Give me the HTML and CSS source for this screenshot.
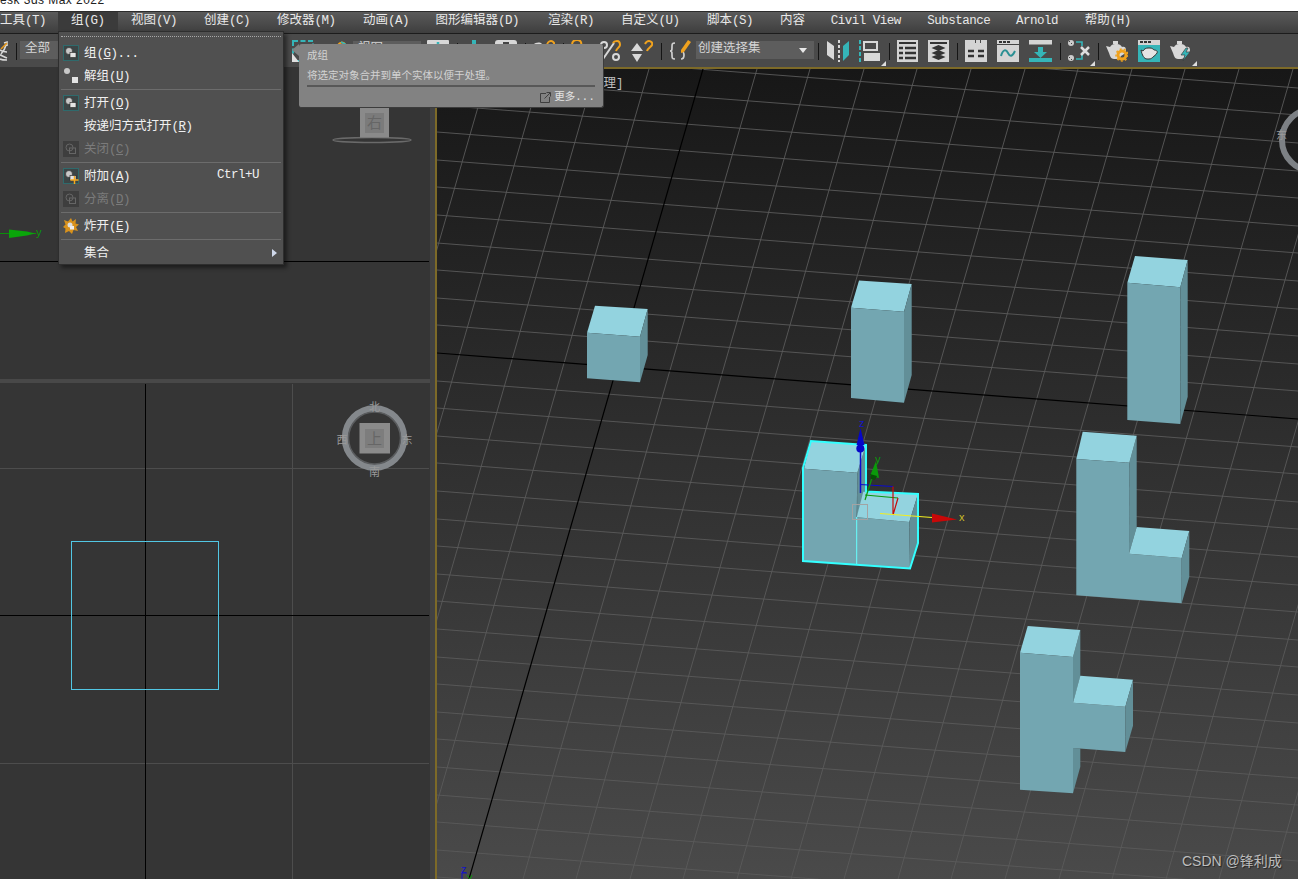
FILE: index.html
```html
<!DOCTYPE html>
<html lang="zh">
<head>
<meta charset="utf-8">
<title>Autodesk 3ds Max 2022</title>
<link rel="stylesheet" href="styles.css">
</head>
<body>
<svg class="defs" width="0" height="0" aria-hidden="true">
  <defs>
    <symbol id="teapot" viewBox="0 0 22 22">
      <path d="M0 6l4 1c1-2 3-3 5-3h2c2 0 4 1 5 3 2-1 4 0 4 3s-3 5-5 6c-1 2-2 3-4 3H8c-3 0-4-3-5-6z" fill="#d8d8d8"/>
      <rect x="7" y="1" width="5" height="3" fill="#d8d8d8"/>
    </symbol>
    <symbol id="grp" viewBox="0 0 16 16">
      <rect x=".5" y=".5" width="15" height="15" fill="#3c4546" stroke="#2f6a6c"/>
      <circle cx="6" cy="6" r="3.5" fill="#c8c8c8" stroke="#222" stroke-width=".6"/>
      <rect x="7" y="7.5" width="6" height="5" fill="#e4e4e4" stroke="#222" stroke-width=".6"/>
    </symbol>
    <symbol id="off" viewBox="0 0 16 16">
      <rect width="16" height="16" fill="#3e3e3e"/>
      <circle cx="6.5" cy="6.5" r="3.5" fill="none" stroke="#666"/>
      <rect x="6.5" y="7" width="6" height="5.5" fill="none" stroke="#666"/>
    </symbol>
  </defs>
</svg>

<div class="app">
  <div class="titlebar"><span class="title-text">esk 3ds Max 2022</span></div>

  <nav class="menubar">
    <span class="mb">工具<span class="a">(T)</span></span>
    <span class="mb is-open">组<span class="a">(G)</span></span>
    <span class="mb">视图<span class="a">(V)</span></span>
    <span class="mb">创建<span class="a">(C)</span></span>
    <span class="mb">修改器<span class="a">(M)</span></span>
    <span class="mb">动画<span class="a">(A)</span></span>
    <span class="mb">图形编辑器<span class="a">(D)</span></span>
    <span class="mb">渲染<span class="a">(R)</span></span>
    <span class="mb">自定义<span class="a">(U)</span></span>
    <span class="mb">脚本<span class="a">(S)</span></span>
    <span class="mb">内容</span>
    <span class="mb"><span class="a">Civil View</span></span>
    <span class="mb"><span class="a">Substance</span></span>
    <span class="mb"><span class="a">Arnold</span></span>
    <span class="mb">帮助<span class="a">(H)</span></span>
  </nav>

  <div class="toolbar">
    <svg class="ic ic-chain" viewBox="0 0 22 22"><path d="M15 14c2-2 4-5 5-9M18 3l3-1v4M12 9c3 2 6 3 9 3M12 14c3 1 6 3 9 4M14 19c2 1 4 1 7 1" fill="none" stroke="#d8d8d8" stroke-width="1.6"/><path d="M15 9c2-2 4-4 6-6" fill="none" stroke="#e79a1f" stroke-width="1.6"/></svg>
    <i class="sep sep-tight"></i>
    <span class="dd dd-all">全部</span>
    <svg class="ic ic-region" viewBox="0 0 22 22"><rect x="1" y="1" width="20" height="20" fill="none" stroke="#35b5b8" stroke-width="2" stroke-dasharray="5 2.5"/><path d="M0 13l7 9H0z" fill="#e0e0e0"/></svg>
    <svg class="ic" viewBox="0 0 22 22"><path d="M5 8c3-3 6-4 9-4v8H5z" fill="#d8d8d8"/><path d="M14 5c2-3 5-3 7-1" fill="none" stroke="#f0a21e" stroke-width="2"/><path d="M17 2l4 2-1 3" fill="none" stroke="#35b5b8" stroke-width="1.5"/></svg>
    <span class="dd dd-view">视图</span>
    <svg class="ic ic-snug" viewBox="0 0 22 22"><rect y="0" width="22" height="20" rx="1" fill="#d8d8d8"/><path d="M11 2v14M6 6h10" stroke="#35b5b8" stroke-width="2.5"/></svg>
    <i class="sep"></i>
    <svg class="ic" viewBox="0 0 22 22"><rect x="7" y="0" width="4" height="6" fill="#35b5b8"/><rect x="2" y="8" width="16" height="10" fill="#d8d8d8"/></svg>
    <svg class="ic ic-near" viewBox="0 0 22 22"><rect y="0" width="22" height="16" rx="3" fill="#d8d8d8"/><rect x="8" y="2" width="6" height="3" fill="#444"/></svg>
    <i class="sep"></i>
    <svg class="ic" viewBox="0 0 22 22"><path d="M0 5c3-3 7-3 9-1v9H0z" fill="#d8d8d8"/><path d="M14 6c0-3 2-5 4-5s4 2 3 5-4 3-4 6" fill="none" stroke="#f0a21e" stroke-width="2"/></svg>
    <i class="sep"></i>
    <svg class="ic" viewBox="0 0 22 22"><path d="M1 5c0-3 2-5 5-5s5 2 4 5-4 3-4 6" fill="none" stroke="#f0a21e" stroke-width="2"/></svg>
    <svg class="ic ic-pct" viewBox="0 0 22 22"><circle cx="5" cy="5" r="3" fill="none" stroke="#d8d8d8" stroke-width="2"/><path d="M4 19L15 3" stroke="#d8d8d8" stroke-width="2"/><circle cx="17" cy="17" r="3" fill="none" stroke="#d8d8d8" stroke-width="2"/><path d="M14 3c1-2 2-2 4-2s3 2 3 4-3 3-4 6" fill="none" stroke="#f0a21e" stroke-width="2"/></svg>
    <svg class="ic" viewBox="0 0 22 22"><path d="M6 3l6 8H0z" fill="#d8d8d8"/><path d="M6 22l5-8H1z" fill="#d8d8d8"/><path d="M14 4c1-2 2-3 4-3s4 2 3 4-4 3-5 6" fill="none" stroke="#f0a21e" stroke-width="2"/></svg>
    <i class="sep"></i>
    <svg class="ic ic-braces" viewBox="0 0 22 22"><path d="M6 3C3 3 3 4 3 7s0 4-2 4c2 0 2 1 2 4s0 4 3 4" fill="none" stroke="#d0d0d0" stroke-width="1.7"/><path d="M14 12c1 1 1 2 1 3s0 4-3 4" fill="none" stroke="#d0d0d0" stroke-width="1.7"/><path d="M12 10L19 0l3 2-7 10-3 1z" fill="#f0a21e"/></svg>
    <span class="dd dd-sets">创建选择集<i class="dd-arrow"></i></span>
    <i class="sep sep-after-dd"></i>
    <svg class="ic" viewBox="0 0 22 22"><path d="M0 1l7 5v14l-7-5z" fill="#d8d8d8"/><path d="M12 0v22" stroke="#d8d8d8" stroke-width="2" stroke-dasharray="3 2"/><path d="M16 6l6-5v14l-6 6z" fill="#35b5b8"/></svg>
    <span class="ic-wrap">
      <svg class="ic" viewBox="0 0 22 22"><path d="M1 0v22" stroke="#35b5b8" stroke-width="2" stroke-dasharray="4 2"/><rect x="5" y="2" width="13" height="8" fill="none" stroke="#d8d8d8" stroke-width="2"/><rect x="5" y="13" width="16" height="8" fill="#d8d8d8"/></svg>
      <i class="flyout"></i>
    </span>
    <i class="sep"></i>
    <svg class="ic ic-doc" viewBox="0 0 21 22"><rect width="21" height="22" fill="#d4d4d4"/><path d="M2 3h17" stroke="#333" stroke-width="2"/><path d="M2 8h4M8 8h11M2 13h4M8 13h11M2 18h4M8 18h11" stroke="#333" stroke-width="2.5"/></svg>
    <svg class="ic ic-doc" viewBox="0 0 21 22"><rect width="21" height="22" fill="#d4d4d4"/><path d="M2 3h17" stroke="#333" stroke-width="2"/><path d="M10.500 5l7 3-7 3-7-3zM10.500 10l7 3-7 3-7-3zM10.500 14l7 3-7 3-7-3z" fill="#333"/></svg>
    <i class="sep"></i>
    <svg class="ic" viewBox="0 0 22 22"><path d="M0 0h10v3h1V0h4v3h1V0h6v22H0z" fill="#d4d4d4"/><path d="M3 11h6M13 11h6M3 16h6M13 16h6" stroke="#333" stroke-width="2.500"/></svg>
    <svg class="ic" viewBox="0 0 22 22"><rect width="22" height="22" fill="#d4d4d4"/><path d="M0 4.500h22" stroke="#444" stroke-width="1"/><path d="M2 2h3M6 2h3M10 2h3" stroke="#333" stroke-width="2"/><path d="M4 16c2-7 5-7 7-3s4 4 7-2" fill="none" stroke="#2a8f93" stroke-width="2"/></svg>
    <svg class="ic ic-wide" viewBox="0 0 23 22"><rect width="23" height="4.500" fill="#d4d4d4"/><path d="M9 7h5v5h4l-6.500 6L5 12h4z" fill="#35b5b8"/><rect y="18" width="23" height="4" fill="#35b5b8"/></svg>
    <i class="sep"></i>
    <span class="ic-wrap">
      <svg class="ic" viewBox="0 0 22 22"><circle cx="3" cy="3" r="3" fill="#ccc"/><circle cx="3" cy="18" r="3" fill="#ccc"/><path d="M1 1h1v1H1zM3 3h1v1H3zM1 17h1v1H1zM3 19h1v1H3z" fill="#444"/><path d="M8 2h6v4M8 19h6v-4" fill="none" stroke="#35b5b8" stroke-width="1.600"/><path d="M13 7l8 8M21 7l-8 8" stroke="#ddd" stroke-width="2.500"/></svg>
      <i class="flyout"></i>
    </span>
    <i class="sep"></i>
    <svg class="ic" viewBox="0 0 22 22"><use href="#teapot"/><circle cx="16" cy="15" r="4" fill="none" stroke="#f0a21e" stroke-width="3"/><circle cx="16" cy="15" r="6" fill="none" stroke="#f0a21e" stroke-width="1.500" stroke-dasharray="2 2.200"/></svg>
    <svg class="ic" viewBox="0 0 22 22"><rect width="22" height="22" fill="#35b5b8"/><rect width="22" height="5" fill="#d4d4d4"/><path d="M2 2h3M6 2h3M10 2h3" stroke="#333" stroke-width="2"/><path d="M3 10l2 1c1-2 3-3 5-3h2c2 0 3 1 4 2 2 0 4 1 3 3s-3 3-4 4c-1 1-2 2-4 2H9c-3 0-5-4-6-9z" fill="#e4e4e4" stroke="#333" stroke-width="1"/></svg>
    <span class="ic-wrap">
      <svg class="ic" viewBox="0 0 22 22"><use href="#teapot"/><path d="M16 8l-5 7h4l-2 6 7-9h-4l2-4z" fill="#35b5b8" stroke="#3d3d3d" stroke-width=".7"/></svg>
      <i class="flyout"></i>
    </span>
  </div>

  <div class="workspace">
    <div class="left">
      <div class="pane pane-top">
        <svg class="pane-svg" viewBox="0 67 430 312" width="430" height="312">
          <path d="M0 261.500H429" stroke="#000" stroke-width="1.200"/>
          <path d="M0 233.500H36" stroke="#0a8f0a"/>
          <path d="M9 229.500L27 231.500 35 233.500 27 235.500 9 238z" fill="#0aa50a"/>
          <text class="axis" x="36" y="236" fill="#0a9a0a">y</text>
          <ellipse cx="372" cy="140" rx="39" ry="2.500" fill="none" stroke="#6a6a6a" stroke-width="1.500"/>
          <rect x="360" y="100" width="29" height="37.500" fill="#8a8a8a"/>
          <rect x="365" y="113" width="19" height="20" fill="#7b7b7b"/>
          <text class="cube-face" x="374.500" y="128" text-anchor="middle">右</text>
        </svg>
      </div>
      <div class="pane-divider"></div>
      <div class="pane pane-bottom">
        <svg class="pane-svg" viewBox="0 383 430 496" width="430" height="496">
          <path d="M292.500 384V879M0 468.500H429M0 763.500H429" stroke="#4d4d4d"/>
          <path d="M145.500 384V879M0 615.500H429" stroke="#000"/>
          <rect x="71.500" y="541.500" width="147" height="148" fill="none" stroke="#52c7e4"/>
          <circle cx="374.500" cy="438" r="29.500" fill="none" stroke="#84888c" stroke-width="6.500"/>
          <circle cx="374.500" cy="438" r="26" fill="none" stroke="#5a5c5e" stroke-width="1.500"/>
          <rect x="359.500" y="423" width="30.500" height="30.500" fill="#8b8b8b"/>
          <rect x="365" y="429" width="19" height="19" fill="#7d7d7d"/>
          <text class="cube-face" x="374.500" y="444" text-anchor="middle">上</text>
          <text class="compass" x="374.500" y="411" text-anchor="middle">北</text>
          <text class="compass" x="374.500" y="476" text-anchor="middle">南</text>
          <text class="compass" x="342" y="444" text-anchor="middle">西</text>
          <text class="compass" x="407" y="444" text-anchor="middle">东</text>
        </svg>
      </div>
    </div>
    <div class="gutter"></div>
    <div class="main">
      <svg class="main-svg" viewBox="437 69 861 810" width="861" height="810">
        <path class="grid" d="M437 -6l861 66M437 22l861 66M437 49l861 66M437 77l861 66M437 105l861 66M437 132l861 66M437 160l861 66M437 187l861 66M437 215l861 66M437 243l861 66M437 270l861 66M437 298l861 66M437 325l861 66M437 381l861 66M437 408l861 66M437 436l861 66M437 463l861 66M437 491l861 66M437 519l861 66M437 546l861 66M437 574l861 66M437 601l861 66M437 629l861 66M437 657l861 66M437 684l861 66M437 712l861 66M437 739l861 66M437 767l861 66M437 795l861 66M437 822l861 66M437 850l861 66M437 877l861 66"/>
        <path class="grid" d="M489 69l-234 810M542 69l-234 810M596 69l-234 810M649 69l-234 810M757 69l-234 810M810 69l-234 810M864 69l-234 810M917 69l-234 810M971 69l-234 810M1025 69l-234 810M1078 69l-234 810M1132 69l-234 810M1185 69l-234 810M1239 69l-234 810M1293 69l-234 810M1346 69l-234 810M1400 69l-234 810M1453 69l-234 810M1507 69l-234 810"/>
        <path class="axis-line" d="M437 353l861 66M703 69l-234 810"/>

        <g class="box">
          <path class="t" d="M595 305.700L647.700 309 640 336.700 587 332.700z"/>
          <path class="f" d="M587 332.700L640 336.700V382.300L587 378.300z"/>
          <path class="s" d="M640 336.700L647.700 309V355L640 382.300z"/>
        </g>
        <g class="box">
          <path class="t" d="M859 280.500L911.700 284 904 311.700 851 307.700z"/>
          <path class="f" d="M851 307.700L904 311.700V402.700L851 398z"/>
          <path class="s" d="M904 311.700L911.700 284V375L904 402.700z"/>
        </g>
        <g class="box">
          <path class="t" d="M1135 256L1187.700 260 1180.300 287.300 1127.300 282.700z"/>
          <path class="f" d="M1127.300 282.700L1180.300 287.300V424L1127.300 420z"/>
          <path class="s" d="M1180.300 287.300L1187.700 260V396.700L1180.300 424z"/>
        </g>
        <g class="box">
          <path class="s" d="M1129.300 462.700L1136.700 435.700V527L1129 553.700z"/>
          <path class="t" d="M1082.700 431.700L1136.700 435.700 1129.300 462.700 1076.300 459z"/>
          <path class="f" d="M1076.300 459L1129.300 462.700 1129 553.700 1181.700 558V603.300L1076.300 595.300z"/>
          <path class="t" d="M1136.700 527L1189.300 531 1181.700 558 1129 553.700z"/>
          <path class="s" d="M1181.700 558L1189.300 531V576.700L1181.700 603.300z"/>
        </g>
        <g class="box">
          <path class="s" d="M1073 657L1080.300 630V676L1073 703z"/>
          <path class="s" d="M1073 748L1080.300 748.500V766.700L1073 793.300z"/>
          <path class="t" d="M1027.700 626L1080.300 630 1073 657 1020 652.700z"/>
          <path class="f" d="M1020 652.700L1073 657V702.700L1125.300 706.700V752L1073 748V793.300L1020 789.700z"/>
          <path class="t" d="M1080.300 675.700L1133 679.700 1125.300 706.700 1073 702.700z"/>
          <path class="s" d="M1125.300 706.700L1133 679.700V725.700L1125.300 752z"/>
        </g>

        <g class="box">
          <path class="s" d="M857.300 472.700L866 444.700V491L857 517z"/>
          <path class="t" d="M810.700 441.300L866 444.700 857.300 472.700 804 468.700z"/>
          <path class="f" d="M804 468.700L857.300 472.700 856.700 517.300 909.300 522 910 568.700 803 561z"/>
          <path class="t" d="M863.300 491.700L918 494 909.300 522 856.700 517.300z"/>
          <path class="s" d="M909.300 522L918 494V543.300L910 568.700z"/>
        </g>
        <path d="M803 561V468L811 441 866 445V491.500L918 494V543L910 568.500z" fill="none" stroke="#3ff" stroke-width="2"/>
        <path d="M856.700 517V564" stroke="#6ff" stroke-width="1"/>

        <rect x="852.500" y="504.500" width="15" height="15" fill="none" stroke="#a3a3a3"/>
        <path d="M860.500 493V448" stroke="#0a0ad0" stroke-width="1.500"/>
        <path d="M860.500 428L856.500 445H864.500z" fill="#0606c8"/>
        <circle cx="860.300" cy="448.500" r="4" fill="#0606c8"/>
        <path d="M860 484.500L893 486.500" stroke="#0a0ad0" stroke-width="1.200"/>
        <path d="M865 500L872 478" stroke="#0a9a0a" stroke-width="1.200"/>
        <path d="M876 461L870 476 879 478z" fill="#0a9a0a"/>
        <path d="M870 474L877 476 875 480 871 479z" fill="#064f06"/>
        <path d="M865 495L898 498" stroke="#0a9a0a" stroke-width="1.200"/>
        <path d="M893 486.500V515M898 498L893 515" stroke="#c80a0a" stroke-width="1.200"/>
        <path d="M880 513.500L932 517.500" stroke="#f2ee20" stroke-width="1.200"/>
        <path d="M932 513.500L957 519.500 932 522.500z" fill="#c80808"/>
        <text class="axis" x="859" y="427" fill="#1414c8">z</text>
        <text class="axis" x="875" y="463" fill="#0a9a0a">y</text>
        <text class="axis" x="959" y="521" fill="#c8bc28">x</text>

        <circle cx="1313" cy="140" r="31" fill="none" stroke="#7d8185" stroke-width="6"/>
        <text class="compass" x="1276" y="139">东</text>

        <path d="M462 879V873H467" fill="none" stroke="#1414c8"/>
        <text class="axis" x="461" y="873" fill="#1414c8">z</text>
        <path d="M467 875L470 879 472 875" fill="none" stroke="#0a9a0a"/>
      </svg>
      <span class="vp-label">处理]</span>
    </div>
  </div>

  <div class="menu">
    <div class="tear"></div>
    <div class="mi"><svg class="mi-ic"><use href="#grp"/></svg><span>组<span class="a">(<u>G</u>)...</span></span></div>
    <div class="mi"><svg class="mi-ic" viewBox="0 0 16 16"><circle cx="4" cy="3" r="3" fill="#c8c8c8"/><rect x="9" y="9" width="6" height="6" fill="#e4e4e4"/></svg><span>解组<span class="a">(<u>U</u>)</span></span></div>
    <div class="msep"></div>
    <div class="mi"><svg class="mi-ic"><use href="#grp"/></svg><span>打开<span class="a">(<u>O</u>)</span></span></div>
    <div class="mi"><span class="mi-ic"></span><span>按递归方式打开<span class="a">(<u>R</u>)</span></span></div>
    <div class="mi is-off"><svg class="mi-ic"><use href="#off"/></svg><span>关闭<span class="a">(<u>C</u>)</span></span></div>
    <div class="msep"></div>
    <div class="mi"><svg class="mi-ic" viewBox="0 0 16 16"><use href="#grp" width="16" height="16"/><path d="M11.500 8v8M7.500 12h8" stroke="#f5a81e" stroke-width="1.500"/></svg><span>附加<span class="a">(<u>A</u>)</span></span><span class="a mi-key">Ctrl+U</span></div>
    <div class="mi is-off"><svg class="mi-ic"><use href="#off"/></svg><span>分离<span class="a">(<u>D</u>)</span></span></div>
    <div class="msep"></div>
    <div class="mi"><svg class="mi-ic" viewBox="0 0 16 16"><path d="M8 0l1.500 3.500L13 1l-.5 4.500 3.500 1-3 2.500 2 4-4.500-1L9 16l-3-3-4 2 .5-4.500L0 9l2.500-2.500L1 2l4 1.500z" fill="#d9921c"/><circle cx="7" cy="7" r="2.500" fill="#ddd"/><rect x="7" y="8" width="4" height="3.500" fill="#eee"/></svg><span>炸开<span class="a">(<u>E</u>)</span></span></div>
    <div class="msep"></div>
    <div class="mi"><span class="mi-ic"></span><span>集合</span><i class="mi-arrow"></i></div>
  </div>

  <div class="tip">
    <i class="tip-arrow"></i>
    <div class="tip-title">成组</div>
    <div class="tip-desc">将选定对象合并到单个实体以便于处理。</div>
    <div class="tip-rule"></div>
    <div class="tip-more">
      <svg class="tip-link" viewBox="0 0 11 11"><path d="M6 1.500H.5v9h9V5M4.500 6.500L10 1M6.500 .5h4v4" fill="none" stroke="#3f3f3f"/></svg>
      <span>更多<span class="a">...</span></span>
    </div>
  </div>

  <span class="watermark">CSDN @锋利成</span>
</div>
</body>
</html>
```
FILE: styles.css
```css
* { box-sizing: border-box; }
html, body { margin: 0; padding: 0; background: #353535; }
body {
  font-family: "Liberation Mono", "Noto Sans CJK SC", monospace;
  font-size: 12.5px;
  color: #e8e8e8;
  overflow: hidden;
}
.defs { position: absolute; }
.app {
  position: relative;
  width: 1298px;
  height: 879px;
  overflow: hidden;
  display: flex;
  flex-direction: column;
}
.a { font-size: 12.5px; letter-spacing: -.5px; font-family: "Liberation Mono", monospace; }

/* title */
.titlebar {
  height: 11px;
  background: #fff;
  overflow: hidden;
  color: #222;
  flex: none;
}
.title-text {
  display: block;
  margin-top: -7px;
  font: 12px/14px "Liberation Sans", sans-serif;
  letter-spacing: .45px;
}

/* menu bar */
.menubar {
  height: 23px;
  flex: none;
  margin-left: -13px;
  width: 1311px;
  display: grid;
  grid-template-columns: 71px 60px 73px 73px 86px 72.5px 112.5px 73px 86px 73px 50.7px 96.6px 88.7px 68.7px 1fr;
  align-items: stretch;
  background: linear-gradient(#5a5a5a, #3e3e3e);
  border-top: 1px solid #2c2c2c;
  border-bottom: 1px solid #1c1c1c;
}
.mb {
  padding-left: 13px;
  line-height: 19px;
  white-space: nowrap;
}
.is-open { background: #3b3b3b; }

/* tool bar */
.toolbar {
  height: 33px;
  flex: none;
  display: flex;
  align-items: center;
  background: #4a4a4a;
  margin-left: -14px;
  width: 1312px;
  padding-top: 1px;
}
.ic { width: 22px; height: 22px; flex: none; display: block; }
.ic + .ic, .ic-wrap + .ic, .ic + .ic-wrap { margin-left: 10px; }
.ic-doc { width: 21px; }
.ic-wide { width: 23px; }
.ic-snug { margin-left: 6px; }
.ic-near { margin-left: 8px !important; }
.ic-pct { margin-left: 6px !important; }
.ic-braces { margin-left: 0; }
.ic-wrap { position: relative; flex: none; }
.flyout {
  position: absolute;
  right: -5px;
  bottom: -4px;
  width: 0;
  height: 0;
  border-left: 5px solid transparent;
  border-bottom: 5px solid #ddd;
}
.sep {
  width: 1px;
  height: 17px;
  background: #151515;
  flex: none;
  margin: 0 7px 0 8px;
}
.sep-tight { margin: 0 3px 0 8px; }
.sep-after-dd { margin: 0 8px 0 4px; }
.dd {
  height: 18px;
  line-height: 17px;
  background: #5d5d5d;
  color: #d4d4d4;
  flex: none;
  position: relative;
  padding-left: 5px;
  margin-top: -2px;
}
.dd-all { width: 80px; }
.ic-region { margin-left: 192px; }
.dd-view { width: 68px; margin-left: 7px; }
.dd-sets { width: 118px; margin-left: 5px; padding-left: 2px; }
.dd-arrow {
  position: absolute;
  right: 7px;
  top: 7px;
  width: 0;
  height: 0;
  border: 4px solid transparent;
  border-top: 5px solid #e8e8e8;
  border-bottom: 0;
}

/* workspace */
.workspace { flex: 1; display: flex; min-height: 0; }
.left { width: 430px; flex: none; display: flex; flex-direction: column; }
.pane { background: #353535; }
.pane-top { height: 312px; flex: none; }
.pane-divider { height: 4px; flex: none; background: #484848; }
.pane-bottom { flex: 1; }
.pane-svg, .main-svg { display: block; }
.gutter { width: 5px; flex: none; background: #424242; }
.main {
  position: relative;
  flex: 1;
  border-top: 2px solid #7d6a28;
  border-left: 2px solid #7d6a28;
  background: linear-gradient(#171717, #4a4a4a);
}
.grid { fill: none; stroke: #5a5a5a; stroke-width: .9; }
.axis-line { fill: none; stroke: #000; stroke-width: 1.200; }
.box .t { fill: #93d3df; }
.box .f { fill: #73a6b1; }
.box .s { fill: #628f98; }
.axis { font: 11px "Liberation Sans", sans-serif; }
.cube-face { font: 15px "Noto Sans CJK SC", sans-serif; fill: #666; }
.compass { font: 11px "Noto Sans CJK SC", sans-serif; fill: #9a9a9a; }
.vp-label {
  position: absolute;
  left: 154px;
  top: 7px;
  color: #bdbdbd;
  line-height: 16px;
  white-space: nowrap;
}

/* group menu */
.menu {
  position: absolute;
  left: 58px;
  top: 31px;
  width: 226px;
  height: 234px;
  padding: 4px 0 0;
  background: #505050;
  border: 1px solid #2e2e2e;
  box-shadow: 3px 3px 4px rgba(0, 0, 0, .45);
  z-index: 5;
}
.tear { border-top: 1px dotted #a8a8a8; margin: 0 2px 4px; }
.mi {
  display: flex;
  align-items: center;
  height: 23px;
  padding-left: 4px;
  white-space: nowrap;
  color: #f0f0f0;
}
.mi > span { margin-bottom: 2px; }
.mi-ic { width: 16px; height: 16px; margin-right: 5px; flex: none; display: block; }
.mi-key { margin-left: auto; margin-right: 24px; }
.is-off { color: #7b7b7b; }
.mi-arrow {
  margin-left: auto;
  margin-right: 6px;
  width: 0;
  height: 0;
  border: 4px solid transparent;
  border-left: 5px solid #cfd8ea;
  border-right: 0;
}
.msep { height: 4px; display: flex; align-items: center; }
.msep::before { content: ""; display: block; width: 100%; height: 1px; margin: 0 2px; background: #6c6c6c; }

/* tooltip */
.tip {
  position: absolute;
  left: 299px;
  top: 44px;
  width: 305px;
  height: 64px;
  background: #828282;
  border-radius: 3px;
  border-right: 1px solid #3c3c3c;
  border-bottom: 1px solid #3c3c3c;
  padding: 5px 8px 0 8px;
  color: #d2d2d2;
  font-size: 10.500px;
  z-index: 6;
}
.tip .a { font-size: 10.500px; letter-spacing: .3px; }
.tip-arrow {
  position: absolute;
  left: -7px;
  top: 0;
  width: 7px;
  height: 12px;
  background: #828282;
  clip-path: polygon(100% 0, 0 50%, 100% 100%);
}
.tip-title { line-height: 14px; }
.tip-desc { margin-top: 6px; line-height: 15px; }
.tip-rule { height: 2px; background: #585858; margin-top: 1px; margin-right: 0; }
.tip-more {
  display: flex;
  justify-content: flex-end;
  align-items: center;
  gap: 3px;
  margin-top: 3px;
  line-height: 14px;
  color: #e2e2e2;
}
.tip-link { width: 11px; height: 11px; display: block; }

.watermark {
  position: absolute;
  left: 1182px;
  top: 852px;
  font: 14px/18px "Liberation Sans", "Noto Sans CJK SC", sans-serif;
  color: #bdbdbd;
  text-shadow: 1px 1px 1px rgba(0, 0, 0, .5);
  white-space: nowrap;
}
```
